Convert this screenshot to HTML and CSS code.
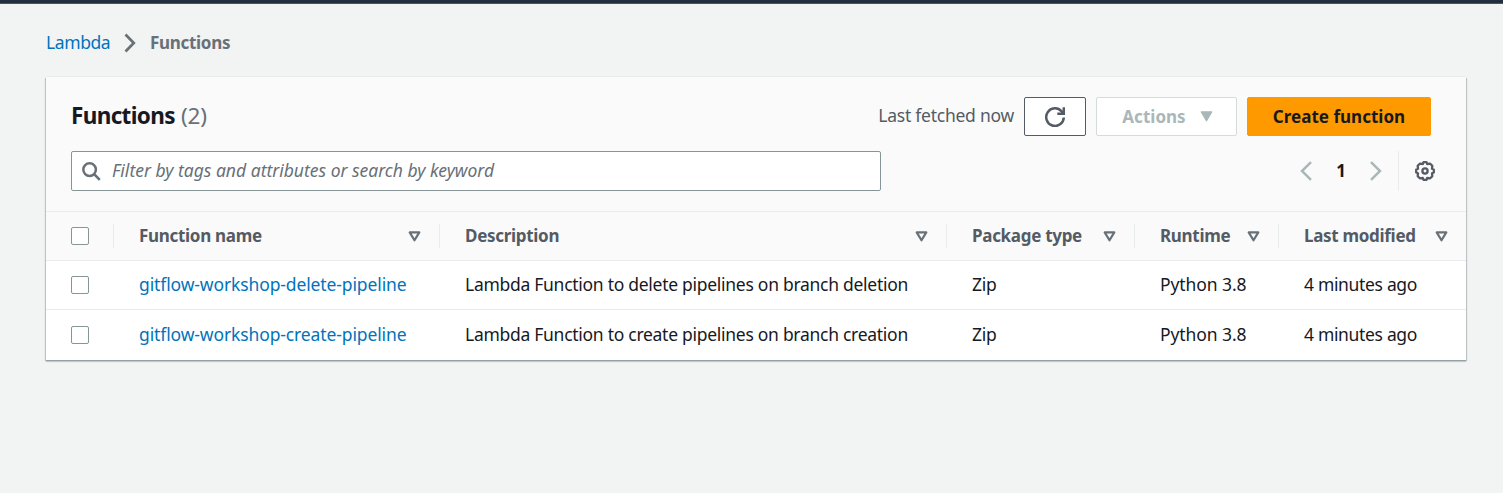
FILE: index.html
```html
<!DOCTYPE html>
<html lang="en">
<head>
<meta charset="utf-8">
<title>Functions - Lambda</title>
<link rel="stylesheet" href="styles.css">
</head>
<body>
<div class="topbar"></div>
<nav class="breadcrumbs">
  <a class="link crumb-root">Lambda</a>
  <svg class="crumb-sep" width="12" height="20" viewBox="0 0 12 20"><path d="M1.5 1.5 L9.8 10 L1.5 18.5" fill="none" stroke="#687078" stroke-width="2.7"/></svg>
  <span class="crumb-current">Functions</span>
</nav>
<main class="card">
  <header class="card-header">
    <div class="title-row">
      <h1 class="title"><span class="title-text">Functions</span> <span class="count">(2)</span></h1>
      <div class="actions">
        <span class="fetched">Last fetched now</span>
        <button class="btn btn-refresh" aria-label="Refresh">
          <svg width="20" height="20" viewBox="0 0 20 20" fill="none" stroke="#545b64" stroke-width="2.5"><path d="M18.8 10.5 A8.8 8.8 0 1 1 16.6 4.3 L18.3 6.3"/><path d="M12.3 6.8 H18.8 V0.3"/></svg>
        </button>
        <button class="btn btn-actions" disabled><span class="actions-text">Actions</span><svg width="13" height="11" viewBox="0 0 13 11"><path d="M1 .8 H12 L6.5 10.2 Z" fill="#aab7b8" stroke="#aab7b8" stroke-linejoin="round"/></svg></button>
        <button class="btn btn-primary"><span class="create-text">Create function</span></button>
      </div>
    </div>
    <div class="tools-row">
      <div class="search">
        <svg width="19" height="19" viewBox="0 0 19 19" fill="none" stroke="#687078" stroke-width="2.5"><circle cx="7.6" cy="7.6" r="6.3"/><path d="M12 12 L17.8 17.8"/></svg>
        <span class="placeholder">Filter by tags and attributes or search by keyword</span>
      </div>
      <div class="pager">
        <svg width="12" height="20" viewBox="0 0 12 20"><path d="M11 1.2 L2 10 L11 18.8" fill="none" stroke="#aab7b8" stroke-width="2.5"/></svg>
        <span class="page">1</span>
        <svg width="12" height="20" viewBox="0 0 12 20"><path d="M1 1.2 L10 10 L1 18.8" fill="none" stroke="#aab7b8" stroke-width="2.5"/></svg>
        <span class="settings">
          <svg width="20" height="20" viewBox="0 0 20 20" fill="none" stroke="#545b64" stroke-width="2.3" stroke-linejoin="round"><path d="M8.5 1.2 H11.5 L12.2 3 L15.2 2.7 L17.3 4.8 L17 7.8 L18.8 8.5 V11.5 L17 12.2 L17.3 15.2 L15.2 17.3 L12.2 17 L11.5 18.8 H8.5 L7.8 17 L4.8 17.3 L2.7 15.2 L3 12.2 L1.2 11.5 V8.5 L3 7.8 L2.7 4.8 L4.8 2.7 L7.8 3 Z"/><circle cx="10" cy="10" r="2.6"/></svg>
        </span>
      </div>
    </div>
  </header>
  <div class="row head">
    <div class="cell check"><span class="box"></span></div>
    <div class="cell"><span>Function name</span><svg class="sort" viewBox="0 0 13 11"><path d="M1.7 1.4 H11.3 L6.5 9.3 Z"/></svg></div>
    <div class="cell"><span>Description</span><svg class="sort" viewBox="0 0 13 11"><path d="M1.7 1.4 H11.3 L6.5 9.3 Z"/></svg></div>
    <div class="cell"><span>Package type</span><svg class="sort" viewBox="0 0 13 11"><path d="M1.7 1.4 H11.3 L6.5 9.3 Z"/></svg></div>
    <div class="cell"><span>Runtime</span><svg class="sort" viewBox="0 0 13 11"><path d="M1.7 1.4 H11.3 L6.5 9.3 Z"/></svg></div>
    <div class="cell"><span>Last modified</span><svg class="sort" viewBox="0 0 13 11"><path d="M1.7 1.4 H11.3 L6.5 9.3 Z"/></svg></div>
  </div>
  <div class="row">
    <div class="cell check"><span class="box"></span></div>
    <div class="cell"><a class="link name">gitflow-workshop-delete-pipeline</a></div>
    <div class="cell"><span class="desc">Lambda Function to delete pipelines on branch deletion</span></div>
    <div class="cell"><span class="pkg">Zip</span></div>
    <div class="cell"><span class="run">Python 3.8</span></div>
    <div class="cell"><span class="mod">4 minutes ago</span></div>
  </div>
  <div class="row last">
    <div class="cell check"><span class="box"></span></div>
    <div class="cell"><a class="link name">gitflow-workshop-create-pipeline</a></div>
    <div class="cell"><span class="desc">Lambda Function to create pipelines on branch creation</span></div>
    <div class="cell"><span class="pkg">Zip</span></div>
    <div class="cell"><span class="run">Python 3.8</span></div>
    <div class="cell"><span class="mod">4 minutes ago</span></div>
  </div>
</main>
</body>
</html>
```
FILE: styles.css
```css
* { box-sizing: border-box; }
body {
  margin: 0;
  height: 493px;
  overflow: hidden;
  background: #f2f3f3;
  color: #16191f;
  font: 17.5px/24px "Noto Sans", "Open Sans", sans-serif;
  letter-spacing: -0.3px;
  white-space: nowrap;
}
svg { display: block; flex: none; }
.topbar { height: 4px; background: #232f3e; border-bottom: 1px solid #4b5562; }
.link { color: #0073bb; }
.breadcrumbs { display: flex; align-items: center; height: 73px; padding: 5px 0 0 46px; }
.crumb-sep { margin: 0 14px 0 13px; }
.crumb-root { width: 65px; padding-bottom: 2px; letter-spacing: -.4px; }
.crumb-current { color: #687078; font-size: 17px; font-weight: 700; }
.card {
  width: 1420px;
  margin-left: 46px;
  background: #fff;
  box-shadow: 0 1px 0 0 #95a3a4, 0 2px 1px 0 rgba(0, 28, 36, .14), 1px 1px 1px 0 rgba(0, 28, 36, .2), -1px 1px 1px 0 rgba(0, 28, 36, .2), 0 -1px 0 0 #eaeded;
}
.card-header { height: 135px; padding: 20px 30px 0 25px; background: #fafafa; border-bottom: 1px solid #eaeded; }
.title-row { display: flex; justify-content: space-between; height: 39px; padding-right: 5px; }
.title { margin: 0; font-size: 22.5px; line-height: 38px; font-weight: 700; letter-spacing: -.65px; }
.count { font-weight: 400; color: #687078; letter-spacing: -.2px; margin-left: 1px; }
.actions { display: flex; gap: 10px; }
.fetched { color: #545b64; line-height: 36px; letter-spacing: -.25px; }
.btn {
  display: flex;
  align-items: center;
  justify-content: center;
  height: 39px;
  padding: 0;
  border: 1px solid #545b64;
  border-radius: 2px;
  background: #fff;
  font: inherit;
  font-size: 17px;
  font-weight: 700;
  letter-spacing: .02px;
}
.btn-refresh { width: 62px; }
.btn-actions { width: 141px; gap: 14px; padding-left: 2px; border-color: #d5dbdb; color: #aab7b8; }
.btn-primary { width: 184px; border-color: #f90; background: #f90; color: #16191f; }
.tools-row { display: flex; justify-content: space-between; margin-top: 15px; }
.search {
  display: flex;
  align-items: center;
  gap: 11px;
  width: 810px;
  height: 40px;
  padding-left: 10px;
  border: 1px solid #879596;
  border-radius: 2px;
  background: #fff;
}
.placeholder { padding-bottom: 2px; color: #687078; font-style: italic; letter-spacing: 0; }
.pager { display: flex; align-items: center; height: 40px; padding-right: 1px; }
.page { width: 58px; text-align: center; font-weight: 700; font-size: 17px; }
.settings { display: flex; align-items: center; height: 40px; margin-left: 16px; padding-left: 16px; border-left: 1px solid #eaeded; }
.row {
  display: grid;
  grid-template-columns: 68px 326px 507px 188px 144px 187px;
  height: 49px;
  border-bottom: 1px solid #eaeded;
}
.row.last { height: 50px; border: 0; }
.cell { display: flex; align-items: center; justify-content: space-between; padding: 0 18px 0 25px; }
.head { background: #fafafa; color: #545b64; font-size: 17px; font-weight: 700; }
.head .cell { height: 24px; margin-top: 12px; border-right: 1px solid #eaeded; }
.head .cell:last-child { border: 0; }
.box { width: 18px; height: 18px; border: 1px solid #879596; border-radius: 2px; background: #fff; }
.sort { width: 13px; height: 11px; fill: none; stroke: #687078; stroke-width: 2.2; stroke-linejoin: round; }
.name, .desc, .pkg, .run, .mod { padding-bottom: 2px; }
.name { letter-spacing: -.12px; }
.desc { letter-spacing: -.28px; }
.run { letter-spacing: -.08px; }
.mod { letter-spacing: -.33px; }
```
